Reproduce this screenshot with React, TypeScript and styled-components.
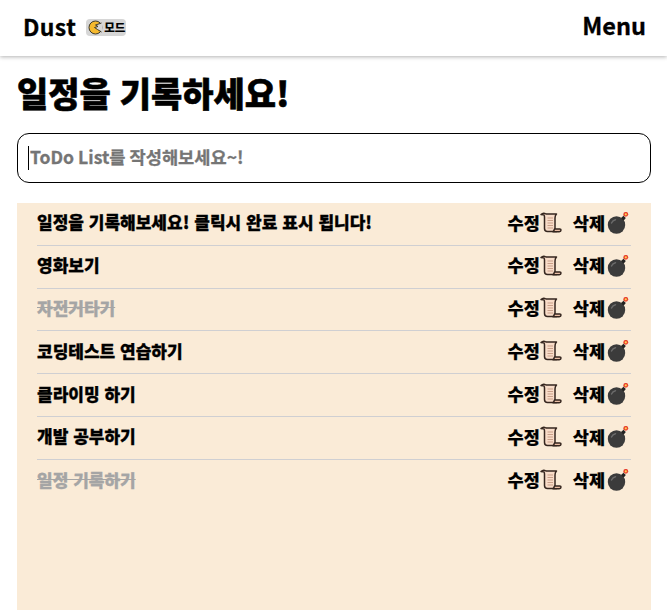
import React from "react";
import styled, { createGlobalStyle } from "styled-components";

const Global = createGlobalStyle`
  html, body { margin: 0; padding: 0; height: 100%; overflow: hidden; background: #fff; }
  body { font-family: "Noto Sans CJK KR", "Noto Sans", sans-serif; color: #000; }
  #root { height: 100%; }
  * { box-sizing: border-box; }
`;

const Page = styled.div`
  height: 610px;
  display: flex;
  flex-direction: column;
`;
const Header = styled.header`
  height: 56px;
  flex: none;
  display: flex;
  align-items: center;
  justify-content: space-between;
  padding: 0 21px 4px 23px;
  box-shadow: 0 1px 4px rgba(0, 0, 0, 0.3);
`;
const Brand = styled.div`
  display: flex;
  align-items: center;
  gap: 10px;
`;
const Logo = styled.span`
  font-size: 23px;
  font-weight: 700;
  line-height: 1;
  letter-spacing: 0.4px;
  -webkit-text-stroke: 0.3px #000;
`;
const Badge = styled.span`
  display: flex;
  align-items: center;
  height: 17px;
  width: 40px;
  padding-left: 2px;
  gap: 1px;
  border-radius: 4px;
  background: #d6d6d6;
  font-size: 11.500px;
  font-weight: 900;
  line-height: 1;
  margin-top: 3px;
`;
const MenuLabel = styled.span`
  font-size: 23.500px;
  font-weight: 700;
  line-height: 1;
  -webkit-text-stroke: 0.3px #000;
`;
const Main = styled.main`
  flex: 1;
  min-height: 0;
  display: flex;
  flex-direction: column;
  padding: 0 16px 0 17px;
`;
const Title = styled.h1`
  margin: 13px 0 0;
  height: 50px;
  font-size: 34px;
  font-weight: 900;
  line-height: 48px;
  white-space: nowrap;
  word-spacing: 1px;
  -webkit-text-stroke: 0.6px #000;
`;
const InputWrap = styled.div`
  position: relative;
  flex: none;
  margin-top: 14px;
`;
const Caret = styled.span`
  position: absolute;
  left: 11px;
  top: 13px;
  width: 1px;
  height: 24px;
  background: #000;
`;
const Input = styled.input`
  display: block;
  width: 100%;
  height: 50px;
  padding: 0 12px 3px;
  border: 1px solid #000;
  border-radius: 12px;
  outline: none;
  background: #fff;
  font-family: inherit;
  font-size: 17.600px;
  font-weight: 700;
  &::placeholder { color: #757575; opacity: 1; -webkit-text-stroke: 0.3px #757575; }
`;
const List = styled.ul`
  flex: 1;
  min-height: 0;
  list-style: none;
  margin: 20px 0 0;
  padding: 0 20px;
  background: #faebd7;
`;
const Row = styled.li`
  height: 42.800px;
  display: flex;
  align-items: center;
  justify-content: space-between;
  border-bottom: 1px solid #cfcfd2;
  &:last-child { border-bottom: none; }
`;
const RowText = styled.span<{ $done?: boolean }>`
  font-size: 17px;
  font-weight: 900;
  line-height: 1;
  padding-bottom: 4px;
  white-space: nowrap;
  word-spacing: 1px;
  color: ${(p) => (p.$done ? "#a5a5a5" : "#000")};
  -webkit-text-stroke: 0.3px ${(p) => (p.$done ? "#a5a5a5" : "#000")};
  text-decoration: ${(p) => (p.$done ? "line-through" : "none")};
`;
const Actions = styled.div`
  display: flex;
  align-items: center;
  gap: 11px;
  padding-right: 1px;
`;
const Action = styled.button`
  display: flex;
  align-items: center;
  padding: 0;
  border: none;
  background: none;
  font-family: inherit;
  font-size: 17.500px;
  font-weight: 900;
  line-height: 1;
  color: #000;
  -webkit-text-stroke: 0.2px #000;
`;
const ActionLabel = styled.span`
  padding-bottom: 3px;
`;
const IconSvg = styled.svg`
  display: block;
  flex: none;
`;

const Scroll = () => (
  <IconSvg width="22" height="24" viewBox="2 1 22 24">
    <path d="M3 3.500c1.500-1.500 3.500-1.500 5-.5h10.500c-1 1-1.500 2.200-1.500 4v11c0 1.200.6 2 1.700 2.500H9.500c-2 0-3-1-3-3V6c0-1.800-1-2.800-2.200-2.300z" fill="#f8dcc8" stroke="#35261f" strokeWidth="1.500" strokeLinejoin="round" />
    <path d="M15 20.800h6.300c1 0 1.700-.7 1.700-1.700 0-.7-.5-1.100-1.200-1.100H16.500c-.3 1-.6 2-1.500 2.800z" fill="#e9bda4" stroke="#35261f" strokeWidth="1.500" strokeLinejoin="round" />
    <path d="M9.500 7h5.500M9.500 9.500h5.500M9.500 12h5.500M9.500 14.500h5.500M9.500 17h5.500" stroke="#c99f88" strokeWidth="1" />
  </IconSvg>
);
const Bomb = () => (
  <IconSvg width="25" height="24" viewBox="0 1.500 25 24">
    <circle cx="11.500" cy="14.500" r="8.700" fill="#3b3b3b" />
    <path d="M6.500 12.500c.8-2 2.200-3 4-3.300" stroke="#6a6a6a" strokeWidth="1.500" fill="none" strokeLinecap="round" />
    <path d="M16 7.500l2.500-2.200 2.300 2.300-2.200 2.600z" fill="#222" />
    <path d="M19 5.500c.3-1 1-1.500 1.500-1.500" stroke="#8a5a3a" strokeWidth="1.200" fill="none" />
    <circle cx="20.800" cy="3.800" r="2.400" fill="#e8412f" />
    <circle cx="20.800" cy="3.800" r="1.100" fill="#ffd34d" />
  </IconSvg>
);
const Moon = () => (
  <IconSvg width="15" height="15" viewBox="0 0 15 15">
    <circle cx="7.500" cy="7.500" r="6.500" fill="#f5b92e" stroke="#3f3a2a" strokeWidth="1" />
    <path d="M14.500 2.500L7.500 5 10 6.500 6.500 7.500 9.500 9.500 14.500 12z" fill="#d6d6d6" />
    <path d="M13.500 3L7.500 5 10 6.500 6.500 7.500 9.500 9.500 13.500 12" fill="none" stroke="#3f3a2a" strokeWidth="1" strokeLinejoin="round" />
  </IconSvg>
);

const items: { text: string; done?: boolean }[] = [
  { text: "일정을 기록해보세요! 클릭시 완료 표시 됩니다!" },
  { text: "영화보기" },
  { text: "자전거타기", done: true },
  { text: "코딩테스트 연습하기" },
  { text: "클라이밍 하기" },
  { text: "개발 공부하기" },
  { text: "일정 기록하기", done: true },
];

export default function App() {
  return (
    <Page>
      <Global />
      <Header>
        <Brand>
          <Logo>Dust</Logo>
          <Badge><Moon />모드</Badge>
        </Brand>
        <MenuLabel>Menu</MenuLabel>
      </Header>
      <Main>
        <Title>일정을 기록하세요!</Title>
        <InputWrap>
          <Input placeholder="ToDo List를 작성해보세요~!" />
          <Caret />
        </InputWrap>
        <List>
          {items.map((it) => (
            <Row key={it.text}>
              <RowText $done={it.done}>{it.text}</RowText>
              <Actions>
                <Action><ActionLabel>수정</ActionLabel><Scroll /></Action>
                <Action><ActionLabel>삭제</ActionLabel><Bomb /></Action>
              </Actions>
            </Row>
          ))}
        </List>
      </Main>
    </Page>
  );
}
